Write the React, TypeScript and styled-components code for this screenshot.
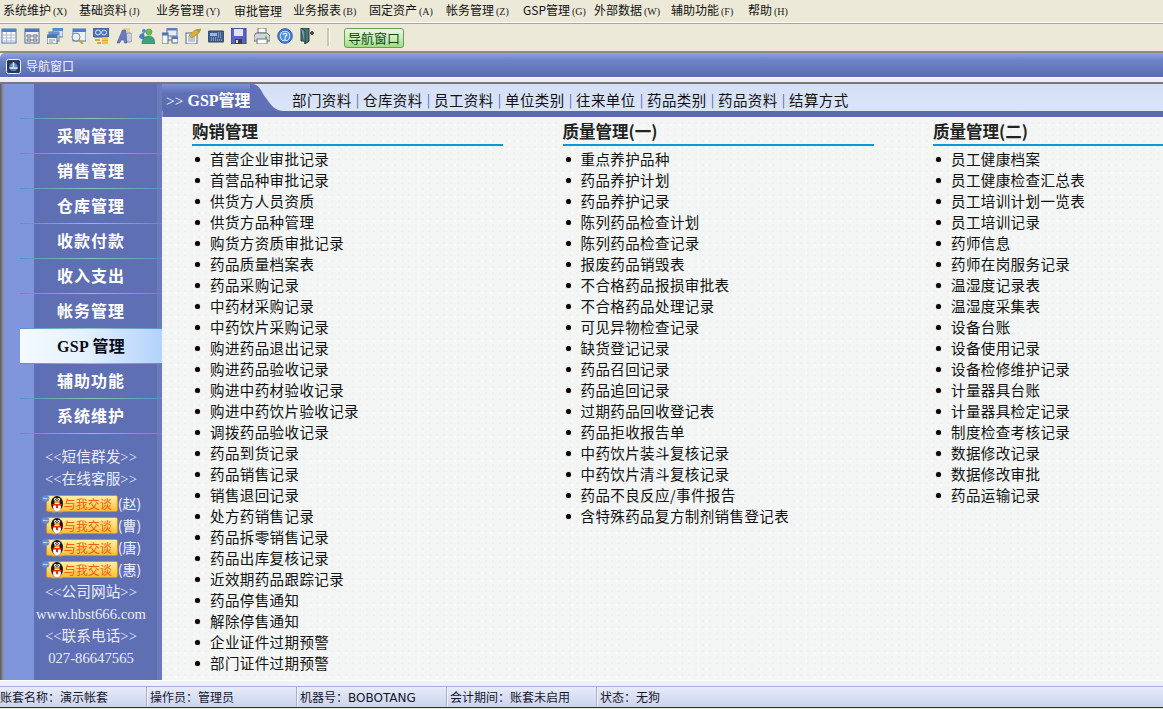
import React from "react";
import styled, { createGlobalStyle } from "styled-components";

const Global = createGlobalStyle`
  html, body { margin: 0; padding: 0; height: 100%; overflow: hidden; background: #ece9d8; }
  * { box-sizing: border-box; }
  body { font-family: "Noto Sans CJK SC", "Liberation Sans", sans-serif; }
`;

const Page = styled.div`
  width: 1163px; height: 709px; display: flex; flex-direction: column; overflow: hidden; background: #ece9d8;
`;
const MenuBar = styled.nav`
  height: 24px; display: flex; align-items: center; padding: 0 0 2px 3px; background: #ece9d8;
  border-bottom: 1px solid #a9a798; box-shadow: inset 0 -1px 0 #fff; flex: none;
`;
const MenuItem = styled.span<{ $w: number }>`
  width: ${p => p.$w}px; font-size: 12px; line-height: 16px; color: #111; white-space: nowrap; flex: none;
`;
const Mnemonic = styled.span`
  font-family: "Liberation Serif", serif; font-size: 10px; margin-left: 2px; color: #222;
`;
const ToolBar = styled.div`
  height: 27px; display: flex; align-items: center; padding-left: 1px; flex: none; background: #ece9d8;
`;
const ToolIcon = styled.span`
  width: 23px; height: 18px; margin-bottom: 4px; display: flex; align-items: center; justify-content: flex-start; flex: none;
  svg { display: block; opacity: 0.9; }
`;
const ToolSep = styled.span`
  width: 2px; height: 18px; margin: 0 15px 2px 4px; background: #c9c6b4; box-shadow: 1px 0 0 #fff; flex: none;
`;
const NavButton = styled.button`
  width: 60px; height: 20px; padding: 0; border: 1px solid #6f9a5f; border-radius: 3px; font: inherit; font-size: 13px; line-height: 17px;
  color: #14461a; background: linear-gradient(#eaf9e2, #c5eeb2 55%, #9edb85);
`;
const Frame = styled.div`
  flex: 1; display: flex; flex-direction: column; border-top: 2px solid #8c8c8c; min-height: 0;
`;
const TitleBar = styled.div`
  height: 24px; display: flex; align-items: center; gap: 5px; padding: 2px 0 0 6px; flex: none;
  background: linear-gradient(#8ea3e0, #6f84c8 30%, #5b6aae); border-radius: 5px 0 0 0;
`;
const TitleText = styled.span`
  font-size: 12px; color: #eef0fb; line-height: 16px;
`;
const Strip = styled.div`
  height: 7px; flex: none; background: #eeeef2; border-bottom: 2px solid #77777c; box-shadow: inset 0 1px 0 #fff;
`;
const Body = styled.div`
  flex: 1; display: flex; min-height: 0;
`;
const Side = styled.aside`
  width: 162px; flex: none; display: flex; flex-direction: column; padding-top: 34px;
  background: linear-gradient(90deg, #55595f 0, #8b8f9e 3px, #8096dc 5px, #8096dc 34px, #5f6fb3 34px, #5f6fb3 157px, #6b7ab8 157px, #6b7ab8 162px);
`;
const SideItem = styled.div<{ $active?: boolean }>`
  height: 35px; margin-left: 20px; padding-bottom: 2px; display: flex; align-items: center; justify-content: center; flex: none;
  font-family: "Liberation Serif", "Noto Sans CJK SC", serif; font-size: 16px; font-weight: 700;
  letter-spacing: ${p => (p.$active ? "0.3px" : "1px")};
  border-top: 1px solid; border-image: linear-gradient(90deg, #5b8fc9, #8fc2b8 50%, #5b8fc9) 1;
  color: ${p => (p.$active ? "#0b0b18" : "#fff")};
  background: ${p => (p.$active ? "linear-gradient(90deg, #f4faff, #e4f1ff 45%, #b3d2fa)" : "transparent")};
`;
const SideLinks = styled.div`
  margin: 0 0 0 20px; padding-top: 12px; display: flex; flex-direction: column; border-top: 1px solid;
  border-image: linear-gradient(90deg, #5b8fc9, #8fc2b8 50%, #5b8fc9) 1;
`;
const SideLine = styled.div`
  height: 22px; line-height: 22px; text-align: center; white-space: nowrap; color: #e8ecfb;
  font-family: "Liberation Serif", "Noto Sans CJK SC", serif; font-size: 14.7px;
`;
const QQGroup = styled.div`
  padding: 2px 0 1px; display: flex; flex-direction: column;
`;
const QQRow = styled.div`
  height: 22px; display: flex; align-items: center; justify-content: center; color: #eef1fc; font-size: 14px;
`;
const QQBadge = styled.span`
  position: relative; width: 72px; height: 17px; margin-left: 5px; display: flex; align-items: center; padding-left: 17px; flex: none;
  border: 1px solid #e8881c; border-radius: 2px; background: linear-gradient(#fff0a8, #fed763 60%, #f9bd38);
  color: #f05a14; font-size: 12px; line-height: 15px; white-space: nowrap;
  svg { position: absolute; left: -6px; top: -1px; }
`;
const Main = styled.main`
  flex: 1; min-width: 0; display: flex; flex-direction: column;
  background:
    radial-gradient(circle at 2px 3px, rgba(150, 165, 160, .05) 1px, transparent 1.5px) 0 0 / 7px 6px,
    radial-gradient(circle at 5px 1px, rgba(255, 255, 255, .45) 1px, transparent 1.5px) 0 0 / 9px 8px,
    #f3f6f4;
`;
const TabBar = styled.div`
  height: 34px; flex: none; display: flex; position: relative; padding-bottom: 7px;
  background: linear-gradient(#d5dff5, #dbe5f8) no-repeat top / 100% 27px, #5b6aae;
  box-shadow: inset 0 -1px 0 #f4f7f5, inset 1px 0 0 #8c9ad0;
`;
const TabHead = styled.div`
  width: 88px; height: 27px; flex: none; padding: 5px 0 0 4px; white-space: nowrap; color: #fff; line-height: 24px;
  background: linear-gradient(#7d92d4, #5f70b6 35%, #5b6aae);
  font-family: "Liberation Serif", "Noto Sans CJK SC", serif; font-size: 16px; font-weight: 700;
  small { font-size: 15.5px; font-weight: 400; margin-right: 4px; }
`;
const TabCurve = styled.svg`
  width: 34px; height: 27px; flex: none; display: block;
`;
const TabLinks = styled.div`
  padding: 4px 0 0 8px; height: 27px; display: flex; align-items: center; font-size: 14.5px; color: #111; white-space: nowrap;
`;
const TabLink = styled.span`
  width: 60px; flex: none; letter-spacing: 0.4px;
`;
const TabSep = styled.span`
  width: 11px; flex: none; text-align: center; color: #4f63b5; font-size: 13px;
`;
const Columns = styled.div`
  flex: 1; display: grid; grid-template-columns: 311px 311px 311px; column-gap: 59.5px; padding-left: 30px; overflow: hidden;
`;
const Column = styled.section`
  min-width: 0;
`;
const ColHead = styled.h2`
  margin: 0 0 3px; height: 28px; padding-top: 1px; line-height: 24px; border-bottom: 2px solid #0b9ad8;
  font-family: "Noto Sans CJK SC", serif; font-size: 16.5px; font-weight: 700; color: #222;
`;
const List = styled.ul`
  list-style: none; margin: 0; padding: 0 0 0 3px;
`;
const Row = styled.li`
  height: 21px; padding-bottom: 2px; display: flex; align-items: center; gap: 10px; font-size: 14.5px; letter-spacing: 0.4px; color: #111; white-space: nowrap;
  &::before { content: ""; width: 5px; height: 5px; margin-top: 2px; border-radius: 50%; background: #050510; box-shadow: 0 0 1px #b66a10; flex: none; }
`;
const Footer = styled.div`
  height: 6px; flex: none; background: #f0f1f5; border-top: 1px solid #fff;
`;
const StatusBar = styled.footer`
  height: 22px; margin-bottom: 1px; flex: none; display: flex; align-items: center; border-top: 1px solid #a7b0d4; border-bottom: 1px solid #2a2c44;
  background: linear-gradient(#e7ebf9, #ccd4ee);
`;
const StatusCell = styled.span<{ $w: number }>`
  width: ${p => p.$w}px; height: 100%; flex: none; display: flex; align-items: center; padding: 0 0 1px 3px; font-size: 12px; color: #16162a;
  font-family: "DejaVu Sans", "Noto Sans CJK SC", sans-serif;
  white-space: nowrap; overflow: hidden; border-right: 1px solid #a7b0d4; box-shadow: 1px 0 0 #f4f6fd;
  &:first-child { padding-left: 0; }
  &:last-child { border-right: none; box-shadow: none; }
`;

const Win = ({ children, size = 16 }: { children?: React.ReactNode; size?: number }) => (
  <svg width={size} height={size} viewBox="0 0 16 16">
    {children}
  </svg>
);

const Penguin = () => (
  <svg width="24" height="18" viewBox="0 0 24 18">
    <ellipse cx="4.500" cy="3.500" rx="3.800" ry="3.200" fill="#5f8ad8" />
    <circle cx="3" cy="3.500" r=".7" fill="#fff" /><circle cx="5" cy="3.500" r=".7" fill="#fff" /><circle cx="7" cy="3.500" r=".5" fill="#fff" />
    <ellipse cx="16" cy="8.500" rx="6" ry="7.500" fill="#151515" />
    <ellipse cx="16" cy="12" rx="4" ry="4.500" fill="#fff" />
    <circle cx="14.300" cy="4.500" r="1.400" fill="#fff" /><circle cx="17.700" cy="4.500" r="1.400" fill="#fff" />
    <circle cx="14.600" cy="4.500" r=".6" fill="#111" /><circle cx="17.400" cy="4.500" r=".6" fill="#111" />
    <ellipse cx="16" cy="7" rx="3" ry="1.300" fill="#f5a017" />
    <path d="M11 9h10l-1 1.500h-3v3l-2-.8v-2.200h-3z" fill="#e8261c" />
    <ellipse cx="13" cy="16.500" rx="2.800" ry="1.100" fill="#f5a017" /><ellipse cx="19" cy="16.500" rx="2.800" ry="1.100" fill="#f5a017" />
  </svg>
);

const icons: React.ReactNode[] = [
  <Win key="0"><rect x="1" y="1" width="14" height="14" fill="#fff" stroke="#3d68ad" /><rect x="1" y="1" width="14" height="3" fill="#3f74c8" /><path d="M2 7h12M2 10h12M2 13h12M5.500 4v10M10 4v10" stroke="#a4b4d2" /></Win>,
  <Win key="1"><rect x="1" y="1" width="14" height="14" fill="#eef2fa" stroke="#3d5d96" /><rect x="1" y="1" width="14" height="3" fill="#3d69b4" /><path d="M3 7h4v2H3zM3 11h4v2H3zM9 7h4v2H9zM9 11h4v2H9z" fill="none" stroke="#556" strokeWidth=".9" /></Win>,
  <Win key="2"><rect x="6" y="0" width="10" height="9" fill="#d8e3f6" stroke="#4d77b8" /><rect x="6" y="0" width="10" height="3" fill="#4a80d0" /><rect x="2" y="4" width="10" height="9" fill="#e8edf6" stroke="#4d77b8" /><rect x="2" y="4" width="10" height="3" fill="#5b88cc" /><rect x="0" y="7" width="10" height="9" fill="#f5f7fb" stroke="#3d5d96" /><rect x="0" y="7" width="10" height="3" fill="#3d69b4" /><path d="M2 12h6M2 14h4" stroke="#889" /></Win>,
  <Win key="3"><rect x="3" y="1" width="13" height="12" fill="#eef2fa" stroke="#3d68ad" /><rect x="3" y="1" width="13" height="3" fill="#3f74c8" /><circle cx="6" cy="9" r="4" fill="#e7f6fb" stroke="#6a7f8f" /><path d="M9 12l4 4" stroke="#c69a1e" strokeWidth="2" /></Win>,
  <Win key="4"><rect x="0" y="0" width="16" height="9" rx="2" fill="#3f6db2" stroke="#23407a" /><circle cx="5" cy="4.500" r="2.500" fill="none" stroke="#cfe0f6" /><circle cx="11" cy="4.500" r="2.500" fill="none" stroke="#cfe0f6" /><path d="M2 12h5M4 15h4" stroke="#c28a0c" strokeWidth="1.400" /><rect x="9" y="9" width="6" height="2" fill="#f1c21e" /><rect x="9" y="11.500" width="6" height="2" fill="#dca510" /><rect x="9" y="14" width="6" height="2" fill="#f1c21e" /></Win>,
  <Win key="5"><rect x="8" y="0" width="6" height="5" fill="#e8d38a" /><rect x="10" y="5" width="6" height="9" rx="2" fill="#c9cfdd" stroke="#8892a8" /><path d="M1 15L6.500 2h3L11 15H8.500l-.4-3H5l-1.300 3z" fill="#5b6fc0" stroke="#39488e" strokeWidth=".6" /></Win>,
  <Win key="6"><circle cx="5" cy="3" r="2" fill="#3d82d6" /><path d="M0 9c1-3 2-4 5-4l1 6H2z" fill="#2f76c8" /><circle cx="10" cy="4" r="3" fill="#58b94a" stroke="#2d7e2a" strokeWidth=".5" /><path d="M3 16c0-6 3-8 7-8s6 3 6 8z" fill="#2e9c6e" stroke="#14604a" strokeWidth=".5" /></Win>,
  <Win key="7"><rect x="5" y="0" width="10" height="8" fill="#e8edf6" stroke="#446aa8" /><rect x="5" y="0" width="10" height="2.500" fill="#4a74b8" /><rect x="0" y="5" width="6" height="11" fill="#f3f6fb" stroke="#3d5d96" /><rect x="0" y="5" width="6" height="2.500" fill="#3d69b4" /><rect x="10" y="9" width="6" height="6" fill="#f3f6fb" stroke="#3d5d96" /><rect x="10" y="9" width="6" height="2" fill="#3d69b4" /><path d="M6 12h4" stroke="#555" /></Win>,
  <Win key="8"><rect x="1" y="5" width="11" height="11" fill="#f7f8fb" stroke="#44587c" /><path d="M3 9h7M3 11h7M3 13h7" stroke="#7c8aa6" /><path d="M4 7l6-5 6-1-2 4-7 5z" fill="#d8aa25" stroke="#8a6a18" strokeWidth=".5" /><path d="M11 2l5-1-2 3z" fill="#7a9a2c" /></Win>,
  <Win key="9"><rect x="0" y="3" width="16" height="11" rx="1" fill="#2f5288" stroke="#1d3358" /><rect x="2" y="5" width="7" height="3" fill="#8fb2da" /><path d="M10 5h4M10 7h4M10 9h4M3 10h6M3 12h11" stroke="#a8bcd8" strokeDasharray="1 1" /></Win>,
  <Win key="10"><rect x="0" y="0" width="15" height="16" fill="#4a55c8" stroke="#2b2f80" /><rect x="3" y="1" width="9" height="7" fill="#dfe3fa" /><rect x="4" y="11" width="7" height="5" fill="#2a2a40" /><rect x="5" y="12" width="2" height="3" fill="#dfe3fa" /></Win>,
  <Win key="11"><rect x="4" y="0" width="8" height="5" fill="#fff" stroke="#667" /><path d="M2 5h11l3 3v5H0V8z" fill="#cfd3da" stroke="#5a6470" /><rect x="3" y="11" width="10" height="5" fill="#fff" stroke="#667" /><rect x="11" y="8.500" width="2" height="2" fill="#2cc03c" /></Win>,
  <Win key="12"><circle cx="8" cy="8" r="7.300" fill="#2a6fd6" stroke="#2552a0" /><circle cx="8" cy="8" r="5.300" fill="#fff" /><circle cx="8" cy="8" r="4.500" fill="#3d86e4" /><path d="M6 6.500C6.500 5 9.800 5 9.800 6.800 9.800 8 8 8 8 9.500M8 10.500v1.500" fill="none" stroke="#fff" strokeWidth="1.400" /></Win>,
  <Win key="13"><path d="M1 0h8v13l-4 3v-3H1z" fill="#2d6f66" stroke="#222" /><path d="M1 0l4 3v13" fill="#4a9ad0" stroke="#222" /><path d="M10 5h4M12 3v4" stroke="#222" strokeWidth="1.500" /></Win>,
];

const menus: [string, string | null, number][] = [
  ["系统维护", "(X)", 76], ["基础资料", "(J)", 77], ["业务管理", "(Y)", 78], ["审批管理", null, 59],
  ["业务报表", "(B)", 76], ["固定资产", "(A)", 77], ["帐务管理", "(Z)", 77], ["GSP管理", "(G)", 71],
  ["外部数据", "(W)", 77], ["辅助功能", "(F)", 77], ["帮助", "(H)", 50],
];
const sideItems = ["采购管理", "销售管理", "仓库管理", "收款付款", "收入支出", "帐务管理", "GSP 管理", "辅助功能", "系统维护"];
const tabs = ["部门资料", "仓库资料", "员工资料", "单位类别", "往来单位", "药品类别", "药品资料", "结算方式"];
const columns: [string, string[]][] = [
  ["购销管理", ["首营企业审批记录", "首营品种审批记录", "供货方人员资质", "供货方品种管理", "购货方资质审批记录", "药品质量档案表", "药品采购记录", "中药材采购记录", "中药饮片采购记录", "购进药品退出记录", "购进药品验收记录", "购进中药材验收记录", "购进中药饮片验收记录", "调拨药品验收记录", "药品到货记录", "药品销售记录", "销售退回记录", "处方药销售记录", "药品拆零销售记录", "药品出库复核记录", "近效期药品跟踪记录", "药品停售通知", "解除停售通知", "企业证件过期预警", "部门证件过期预警"]],
  ["质量管理(一)", ["重点养护品种", "药品养护计划", "药品养护记录", "陈列药品检查计划", "陈列药品检查记录", "报废药品销毁表", "不合格药品报损审批表", "不合格药品处理记录", "可见异物检查记录", "缺货登记记录", "药品召回记录", "药品追回记录", "过期药品回收登记表", "药品拒收报告单", "中药饮片装斗复核记录", "中药饮片清斗复核记录", "药品不良反应/事件报告", "含特殊药品复方制剂销售登记表"]],
  ["质量管理(二)", ["员工健康档案", "员工健康检查汇总表", "员工培训计划一览表", "员工培训记录", "药师信息", "药师在岗服务记录", "温湿度记录表", "温湿度采集表", "设备台账", "设备使用记录", "设备检修维护记录", "计量器具台账", "计量器具检定记录", "制度检查考核记录", "数据修改记录", "数据修改审批", "药品运输记录"]],
];
const status: [string, number][] = [["账套名称：演示帐套", 147], ["操作员：管理员", 150], ["机器号：BOBOTANG", 150], ["会计期间：账套未启用", 150], ["状态：无狗", 566]];

export default function App() {
  return (
    <Page>
      <Global />
      <MenuBar>
        {menus.map(([t, m, w]) => (
          <MenuItem key={t} $w={w}>{t}{m && <Mnemonic>{m}</Mnemonic>}</MenuItem>
        ))}
      </MenuBar>
      <ToolBar>
        {icons.map((ic, i) => <ToolIcon key={i}>{ic}</ToolIcon>)}
        <ToolSep />
        <NavButton>导航窗口</NavButton>
      </ToolBar>
      <Frame>
        <TitleBar>
          <svg width="15" height="15" viewBox="0 0 15 15">
            <rect x=".5" y=".5" width="14" height="14" rx="2" fill="#27395f" stroke="#f2f4fb" />
            <circle cx="7.500" cy="8" r="4" fill="#5a8ac8" />
            <path d="M7.500 3v5M3.500 9h8" stroke="#e8eefb" strokeWidth="1.500" />
          </svg>
          <TitleText>导航窗口</TitleText>
        </TitleBar>
        <Strip />
        <Body>
          <Side>
            {sideItems.map((s, i) => <SideItem key={s} $active={i === 6}>{s}</SideItem>)}
            <SideLinks>
              <SideLine>&lt;&lt;短信群发&gt;&gt;</SideLine>
              <SideLine>&lt;&lt;在线客服&gt;&gt;</SideLine>
              <QQGroup>
                {["赵", "曹", "唐", "惠"].map(n => (
                  <QQRow key={n}>
                    <QQBadge><Penguin />与我交谈</QQBadge>({n})
                  </QQRow>
                ))}
              </QQGroup>
              <SideLine>&lt;&lt;公司网站&gt;&gt;</SideLine>
              <SideLine>www.hbst666.com</SideLine>
              <SideLine>&lt;&lt;联系电话&gt;&gt;</SideLine>
              <SideLine>027-86647565</SideLine>
            </SideLinks>
          </Side>
          <Main>
            <TabBar>
              <TabHead><small>&gt;&gt;</small>GSP管理</TabHead>
              <TabCurve viewBox="0 0 34 27" preserveAspectRatio="none">
                <path d="M0 0h2c8 0 9 8 14 14 5 7 9 13 18 13H0z" fill="#5f70b6" />
              </TabCurve>
              <TabLinks>
                {tabs.map((t, i) => (
                  <React.Fragment key={t}>
                    {i > 0 && <TabSep>|</TabSep>}
                    <TabLink>{t}</TabLink>
                  </React.Fragment>
                ))}
              </TabLinks>
            </TabBar>
            <Columns>
              {columns.map(([h, rows]) => (
                <Column key={h}>
                  <ColHead>{h}</ColHead>
                  <List>
                    {rows.map(r => <Row key={r}>{r}</Row>)}
                  </List>
                </Column>
              ))}
            </Columns>
          </Main>
        </Body>
        <Footer />
        <StatusBar>
          {status.map(([t, w]) => <StatusCell key={t} $w={w}>{t}</StatusCell>)}
        </StatusBar>
      </Frame>
    </Page>
  );
}
